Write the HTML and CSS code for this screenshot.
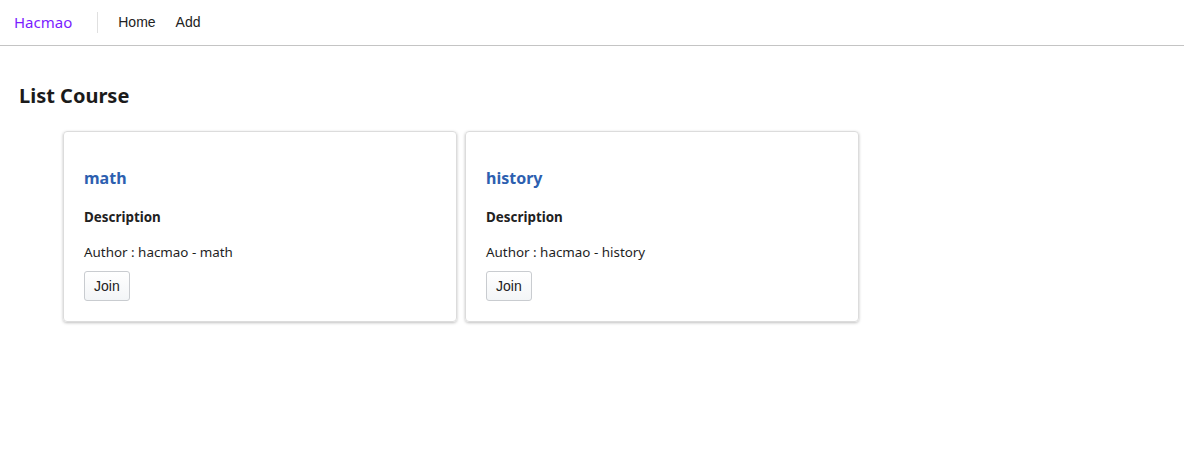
FILE: index.html
```html
<!DOCTYPE html>
<html>
<head>
<meta charset="utf-8">
<link rel="stylesheet" href="styles.css">
</head>
<body>
<nav class="navbar">
  <a class="brand" href="#">Hacmao</a>
  <span class="sep"></span>
  <a class="nav-link" href="#">Home</a>
  <a class="nav-link" href="#">Add</a>
</nav>
<main class="content">
  <h2 class="page-title">List Course</h2>
  <div class="cards">
    <div class="card">
      <h3 class="card-title">math</h3>
      <p class="card-desc">Description</p>
      <p class="card-author">Author : hacmao - math</p>
      <button class="btn">Join</button>
    </div>
    <div class="card">
      <h3 class="card-title">history</h3>
      <p class="card-desc">Description</p>
      <p class="card-author">Author : hacmao - history</p>
      <button class="btn">Join</button>
    </div>
  </div>
</main>
</body>
</html>
```
FILE: styles.css
```css
* { box-sizing: border-box; }
body {
  margin: 0;
  font-family: "Noto Sans", "Open Sans", sans-serif;
  font-size: 14px;
  color: #212121;
  background: #fff;
}
.navbar {
  display: flex;
  align-items: center;
  height: 46px;
  padding: 0 14px;
  border-bottom: 1px solid #c4c4c4;
}
.brand {
  color: #7a1cff;
  text-decoration: none;
  font-size: 15px;
  font-family: "Noto Sans", sans-serif;
  margin-top: -2px;
}
.sep {
  width: 1px;
  height: 21px;
  background: #e0e0e0;
  margin: 0 20px 0 25px;
}
.nav-link {
  font-family: "Liberation Sans", Arial, sans-serif;
  font-size: 14px;
  color: #222;
  text-decoration: none;
  margin-right: 20px;
  margin-top: -2px;
}
.content {
  padding: 36px 19px;
}
.page-title {
  margin: 0 0 22px;
  font-size: 20px;
  font-weight: 700;
  color: #1b1b1b;
}
.cards {
  display: flex;
  gap: 8px;
  padding-left: 44px;
}
.card {
  width: 394px;
  height: 191px;
  border: 1px solid #dcdcdc;
  border-radius: 4px;
  box-shadow: 0 1px 3px rgba(0,0,0,0.25);
  padding: 35px 20px 0;
}
.card-title {
  margin: 0 0 19px;
  font-size: 16px;
  font-weight: 700;
  color: #2d5fb0;
}
.card-desc {
  margin: 0 0 17px;
  font-weight: 700;
  font-size: 13.4px;
}
.card-author {
  margin: 0 0 10px;
  font-size: 13.4px;
  color: #1e1e1e;
}
.btn {
  font-family: "Liberation Sans", Arial, sans-serif;
  font-size: 14px;
  color: #222;
  background: linear-gradient(#ffffff, #f3f5f7);
  border: 1px solid #c9ccd0;
  border-radius: 3px;
  height: 30px;
  padding: 0 9px;
}
```
